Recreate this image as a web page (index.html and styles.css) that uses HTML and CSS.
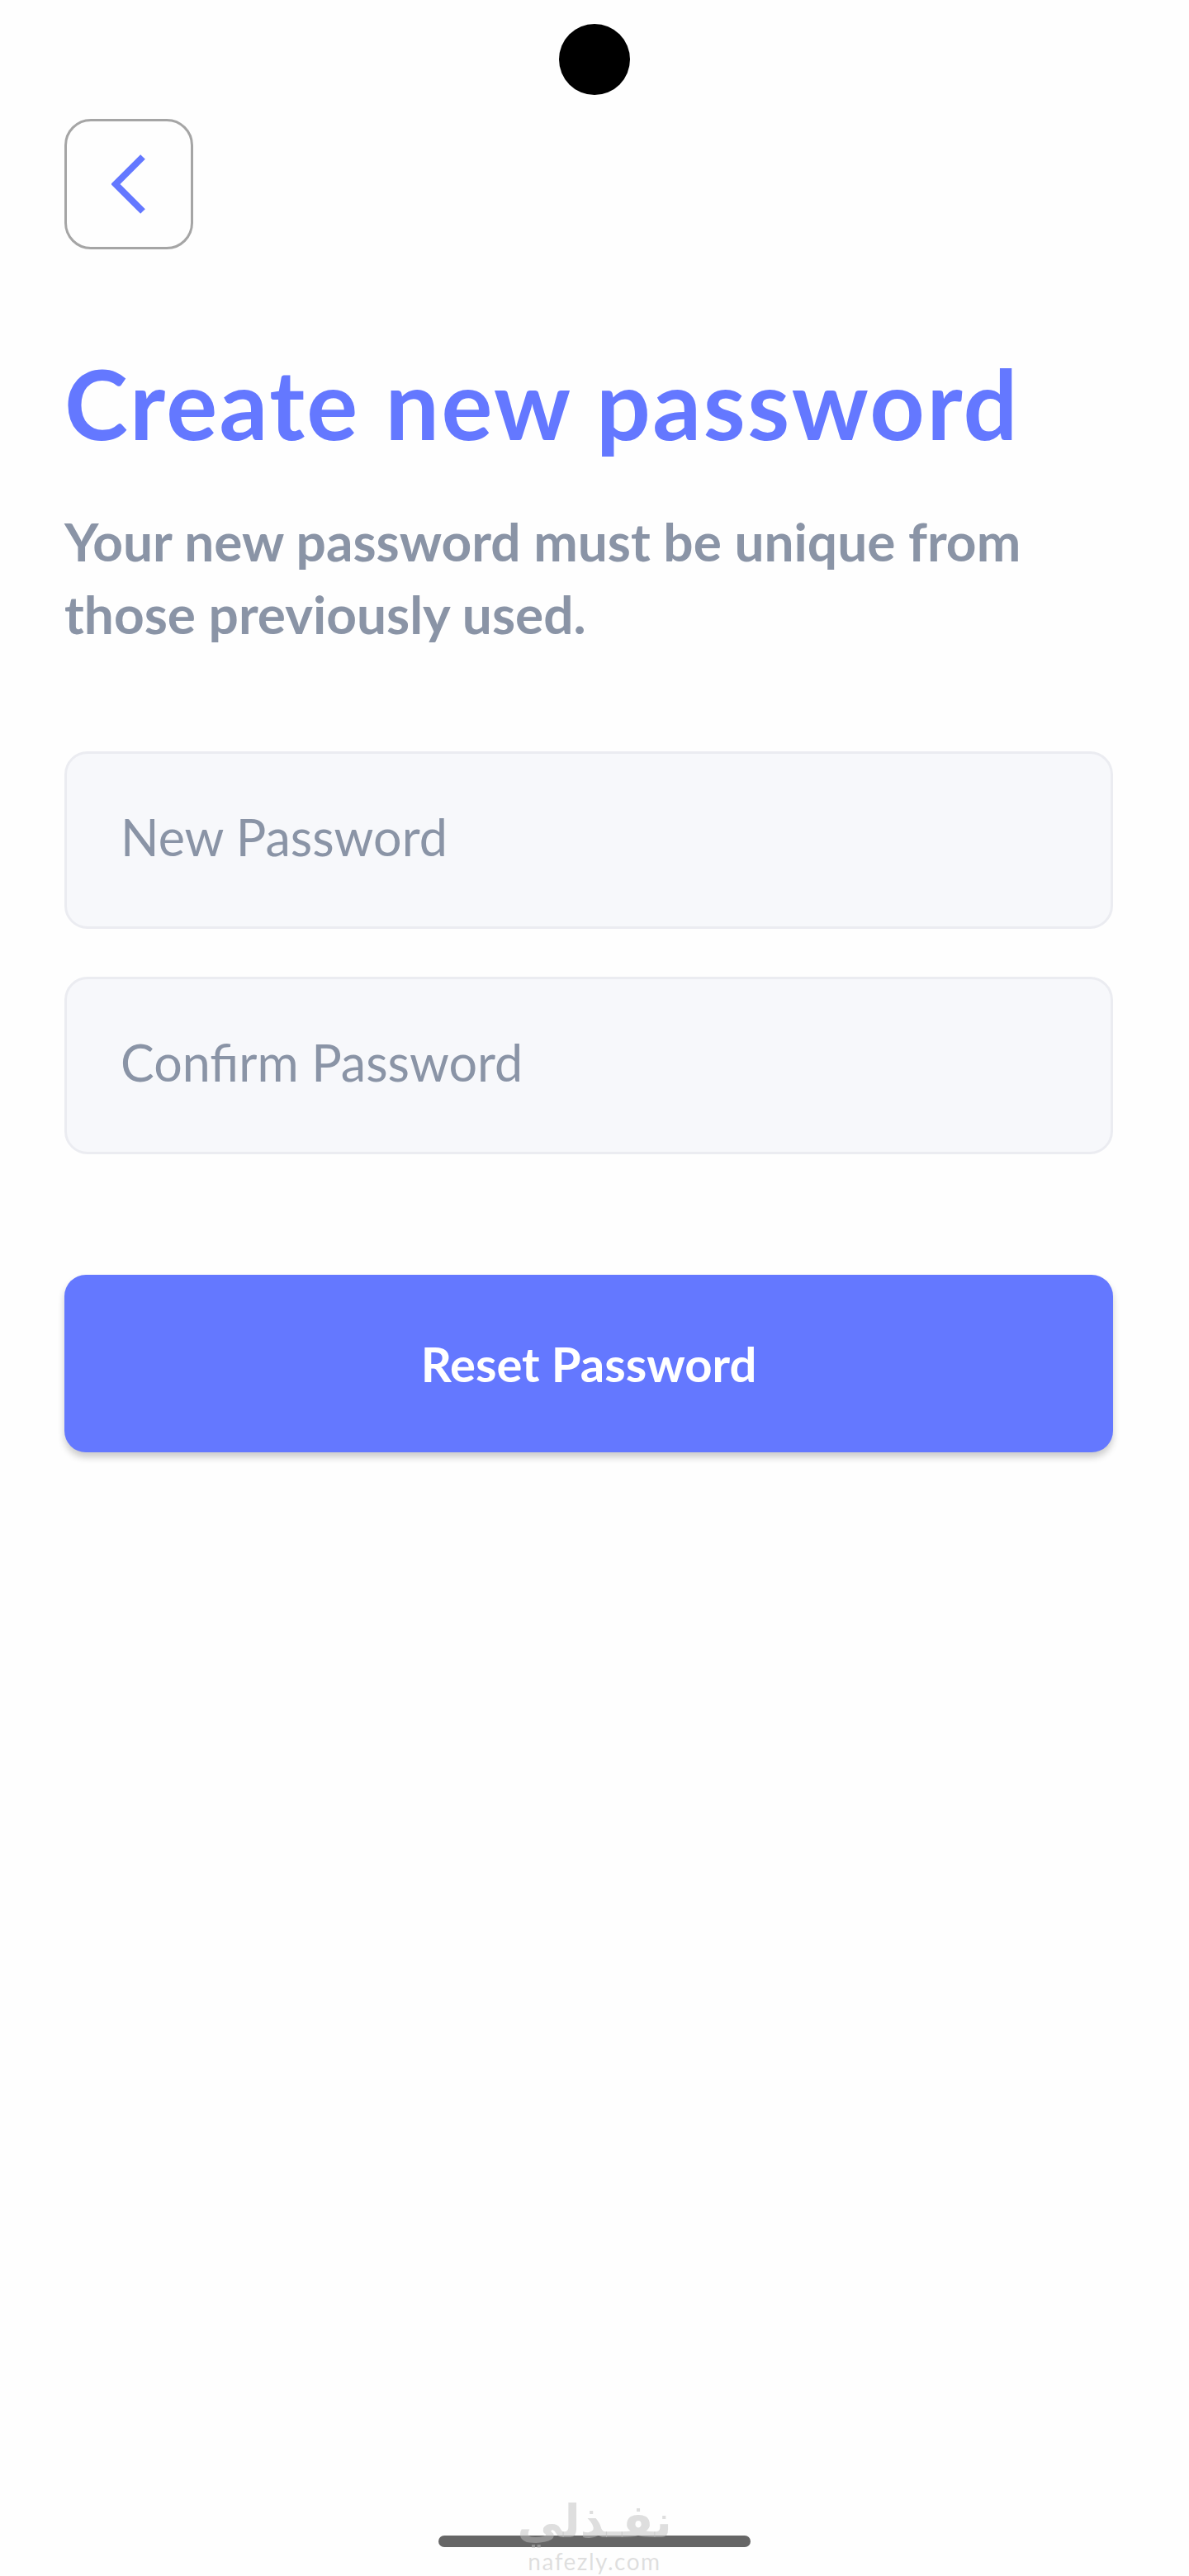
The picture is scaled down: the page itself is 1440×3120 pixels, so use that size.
FILE: index.html
```html
<!DOCTYPE html>
<html lang="en">
<head>
    <meta charset="UTF-8">
    <meta name="viewport" content="width=device-width, initial-scale=1.0">
    <title>Create new password</title>
    <link rel="stylesheet" href="styles.css">
</head>
<body>
    <div class="main-container">
        <div class="status-bar">
            <div class="camera"></div>
        </div>
        <div class="content">
            <button class="back-button" aria-label="Back">
                <svg class="back-icon" viewBox="0 0 42 72" width="42" height="72">
                    <path d="M38 3 L5 36 L38 69" fill="none" stroke="#6478ff" stroke-width="8"/>
                </svg>
            </button>
            <h1 class="title">Create new password</h1>
            <p class="subtitle">Your new password must be unique from<br>those previously used.</p>
            <div class="form">
                <input class="field" type="password" placeholder="New Password">
                <input class="field" type="password" placeholder="Confirm Password">
                <button class="submit-button">Reset Password</button>
            </div>
        </div>
        <div class="home-bar"></div>
        <div class="watermark">
            <span class="watermark-ar" lang="ar" dir="rtl">نفـذلي</span>
            <span class="watermark-en">nafezly.com</span>
        </div>
    </div>
</body>
</html>
```
FILE: styles.css
```css
/* General Styles */
body {
    margin: 0;
    padding: 0;
    background-color: #fefefe;
    font-family: 'Lato', sans-serif;
}

.main-container {
    position: relative;
    height: 3120px;
    display: flex;
    flex-direction: column;
    overflow: hidden;
}

/* Status bar */
.status-bar {
    display: flex;
    justify-content: center;
    padding-top: 29px;
}

.camera {
    width: 86px;
    height: 86px;
    border-radius: 50%;
    background-color: #000;
}

/* Content */
.content {
    flex: 1;
    padding: 29px 92px 0 78px;
}

.back-button {
    display: flex;
    align-items: center;
    justify-content: center;
    box-sizing: border-box;
    width: 156px;
    height: 158px;
    padding: 0;
    background: transparent;
    border: 3px solid #a5a5a5;
    border-radius: 32px;
}

.title {
    margin: 120px 0 0;
    font-size: 116px;
    line-height: 134px;
    font-weight: 700;
    letter-spacing: 2.5px;
    color: #6478ff;
}

.subtitle {
    margin: 56px 0 0;
    font-size: 64px;
    line-height: 88px;
    font-weight: 700;
    color: #8a94a6;
}

/* Form */
.form {
    display: flex;
    flex-direction: column;
    margin-top: 122px;
}

.field {
    box-sizing: border-box;
    width: 100%;
    height: 215px;
    margin-bottom: 58px;
    padding: 0 65px 8px;
    background-color: #f7f8fb;
    border: 3px solid #ebecf1;
    border-radius: 28px;
    font-family: 'Lato', sans-serif;
    font-size: 61px;
    color: #8a94a6;
}

.field::placeholder {
    color: #8a94a6;
    opacity: 1;
}

.submit-button {
    height: 215px;
    margin-top: 88px;
    background-color: #6478ff;
    border: none;
    border-radius: 26px;
    box-shadow: 0 6px 8px rgba(0, 0, 0, 0.2);
    font-family: 'Lato', sans-serif;
    font-size: 58px;
    font-weight: 700;
    color: #fff;
}

/* Home indicator */
.home-bar {
    align-self: center;
    width: 378px;
    height: 14px;
    margin-bottom: 35px;
    border-radius: 7px;
    background-color: #666;
}

/* Watermark */
.watermark {
    position: absolute;
    left: 632px;
    top: 3018px;
    width: 176px;
    display: flex;
    flex-direction: column;
    align-items: center;
    color: rgba(190, 190, 190, 0.5);
    pointer-events: none;
}

.watermark-ar {
    font-family: 'DejaVu Sans', sans-serif;
    font-size: 55px;
    line-height: 72px;
    font-weight: 700;
}

.watermark-en {
    font-family: 'Lato', sans-serif;
    font-size: 28px;
    line-height: 24px;
    letter-spacing: 1.5px;
}
```
